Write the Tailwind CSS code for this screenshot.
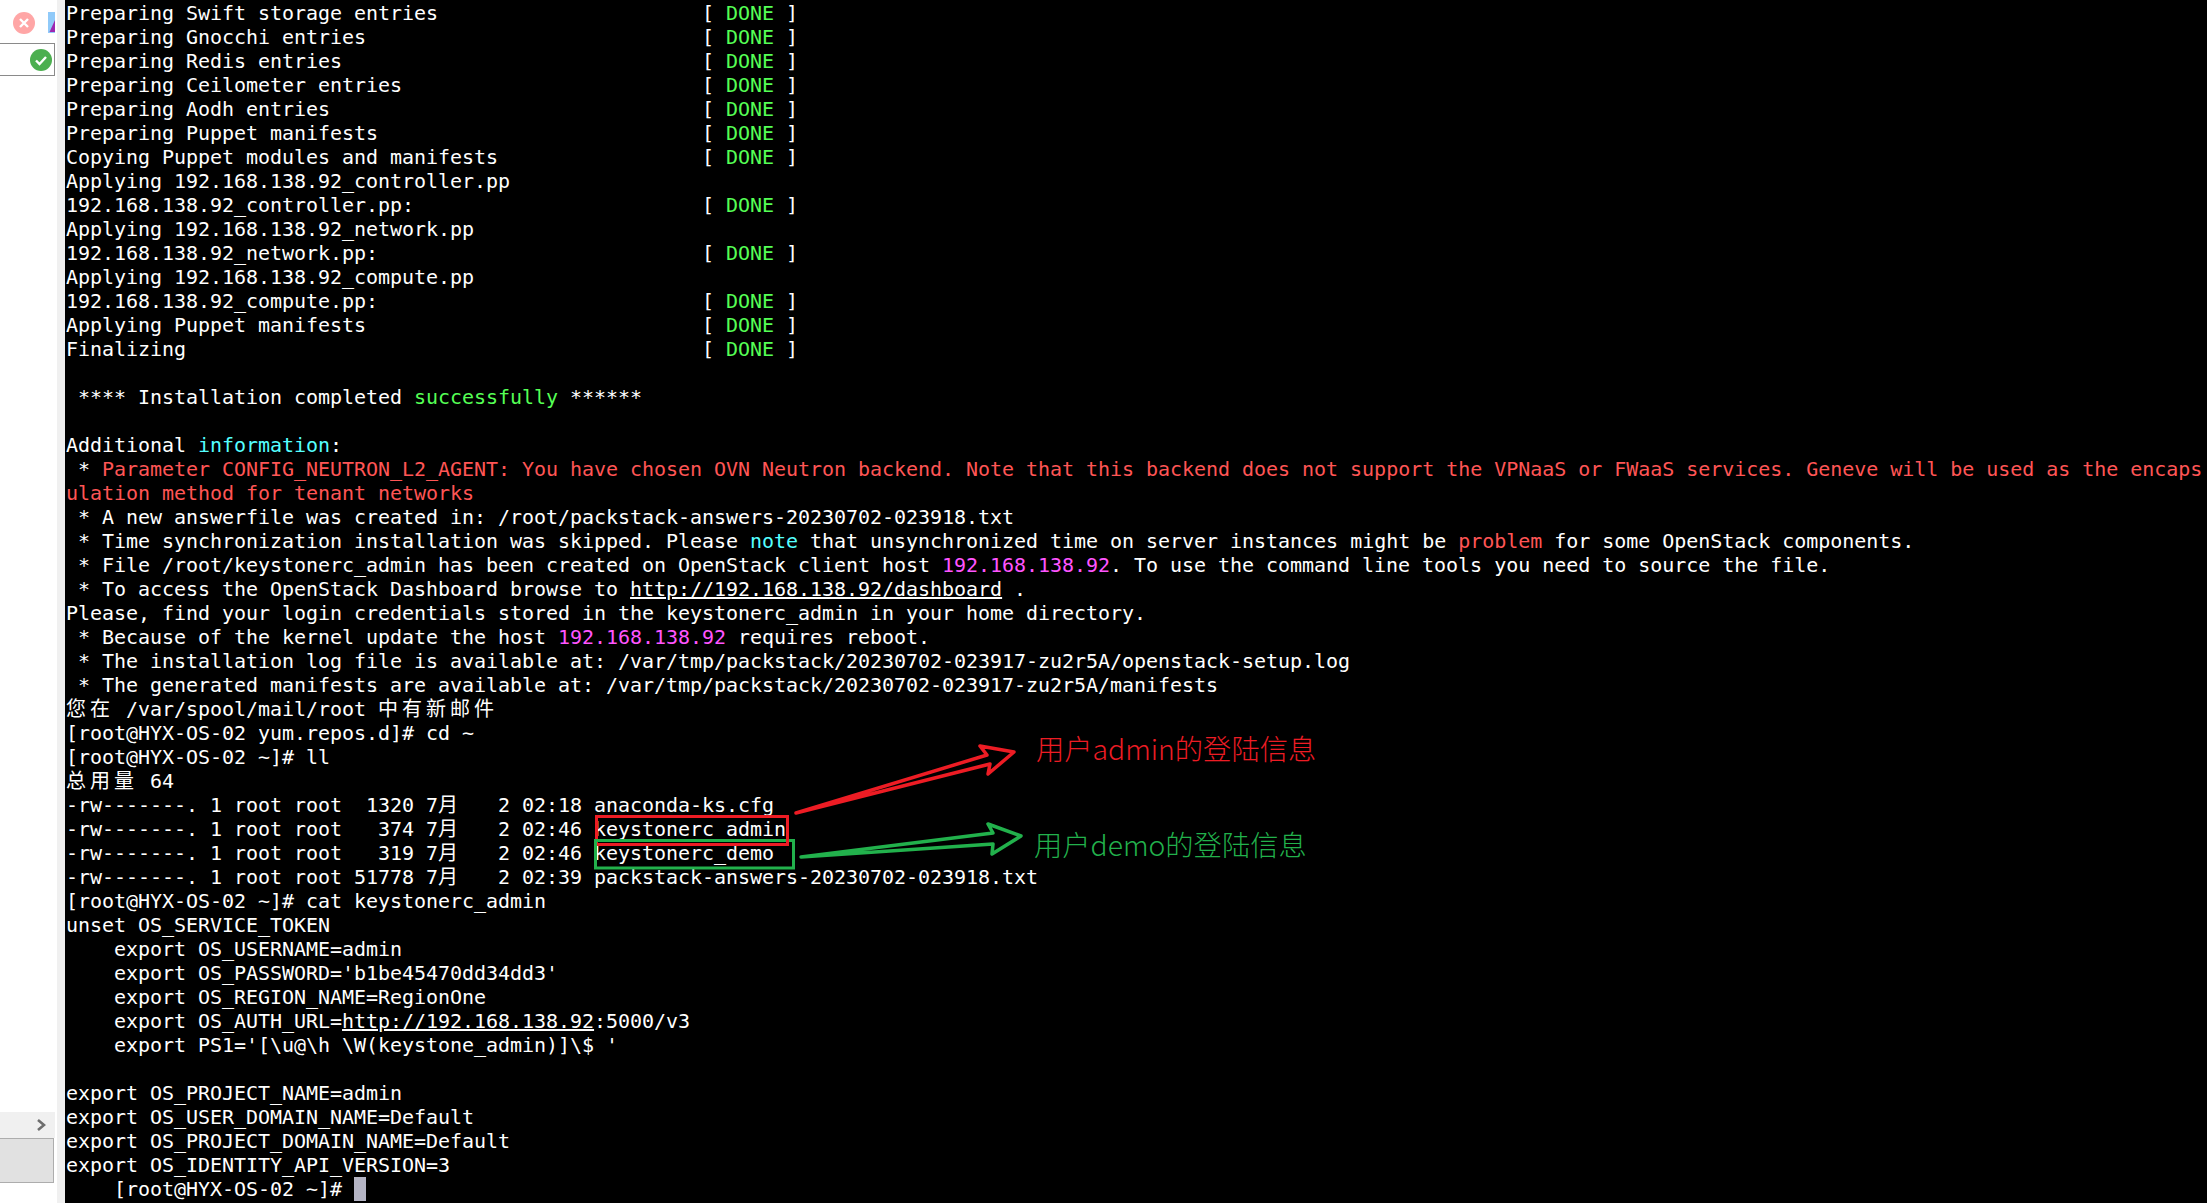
<!DOCTYPE html>
<html>
<head>
<meta charset="utf-8">
<script src="https://cdn.jsdelivr.net/npm/@tailwindcss/browser@4"></script>
</head>
<body class="m-0 bg-black overflow-hidden">
<div class="relative flex w-[2207px] h-[1203px] overflow-hidden">
  <aside class="w-[65px] h-full shrink-0 bg-white flex flex-col border-r-[8px] border-[#f0f0f0]">
    <div class="h-[43px] flex items-start pt-[12px] pl-[13px] gap-[13px]">
      <svg class="w-[22px] h-[22px]" viewBox="0 0 22 22"><circle cx="11" cy="11" r="11" fill="#ffa6a6"/><path d="M7 7l8 8M15 7l-8 8" stroke="#fff" stroke-width="2.4"/></svg>
      <svg class="w-[7px] h-[21px]" viewBox="0 0 7 21"><rect width="7" height="21" fill="#90caf9"/><path d="M1.500 20L7 8v12z" fill="#9c27b0"/></svg>
    </div>
    <div class="h-[33px] w-[55px] bg-white border border-l-0 border-[#8a8a8a] flex items-center justify-end pr-[2px]">
      <svg class="w-[22px] h-[22px]" viewBox="0 0 22 22"><circle cx="11" cy="11" r="11" fill="#4caf50"/><path d="M6 11.500l3.500 3.500L16 8" fill="none" stroke="#fff" stroke-width="2.4"/></svg>
    </div>
    <div class="flex-1"></div>
    <div class="h-[26px] w-[55px] bg-[#f0f0f0] flex items-center justify-end pr-[9px]">
      <svg class="w-[9px] h-[12px]" viewBox="0 0 9 12"><path d="M1 1l6 5-6 5" fill="none" stroke="#6e6e6e" stroke-width="2.600"/></svg>
    </div>
    <div class="h-[45px] w-[54px] bg-[#e1e1e1] border border-l-0 border-[#adadad]"></div>
    <div class="h-[20px]"></div>
  </aside>
  <pre class="flex-1 m-0 pt-px pl-px bg-black text-white font-['DejaVu_Sans_Mono','Noto_Sans_CJK_SC',monospace] text-[20px] leading-[24px] tracking-[-0.04px] overflow-hidden">Preparing Swift storage entries                      [ <span class="text-[#55ff55]">DONE</span> ]
Preparing Gnocchi entries                            [ <span class="text-[#55ff55]">DONE</span> ]
Preparing Redis entries                              [ <span class="text-[#55ff55]">DONE</span> ]
Preparing Ceilometer entries                         [ <span class="text-[#55ff55]">DONE</span> ]
Preparing Aodh entries                               [ <span class="text-[#55ff55]">DONE</span> ]
Preparing Puppet manifests                           [ <span class="text-[#55ff55]">DONE</span> ]
Copying Puppet modules and manifests                 [ <span class="text-[#55ff55]">DONE</span> ]
Applying 192.168.138.92_controller.pp
192.168.138.92_controller.pp:                        [ <span class="text-[#55ff55]">DONE</span> ]
Applying 192.168.138.92_network.pp
192.168.138.92_network.pp:                           [ <span class="text-[#55ff55]">DONE</span> ]
Applying 192.168.138.92_compute.pp
192.168.138.92_compute.pp:                           [ <span class="text-[#55ff55]">DONE</span> ]
Applying Puppet manifests                            [ <span class="text-[#55ff55]">DONE</span> ]
Finalizing                                           [ <span class="text-[#55ff55]">DONE</span> ]

 **** Installation completed <span class="text-[#55ff55]">successfully</span> ******

Additional <span class="text-[#55ffff]">information</span>:
 * <span class="text-[#ff5555]">Parameter CONFIG_NEUTRON_L2_AGENT: You have chosen OVN Neutron backend. Note that this backend does not support the VPNaaS or FWaaS services. Geneve will be used as the encaps
ulation method for tenant networks</span>
 * A new answerfile was created in: /root/packstack-answers-20230702-023918.txt
 * Time synchronization installation was skipped. Please <span class="text-[#55ffff]">note</span> that unsynchronized time on server instances might be <span class="text-[#ff5555]">problem</span> for some OpenStack components.
 * File /root/keystonerc_admin has been created on OpenStack client host <span class="text-[#ff55ff]">192.168.138.92</span>. To use the command line tools you need to source the file.
 * To access the OpenStack Dashboard browse to <span class="underline">http://192.168.138.92/dashboard</span> .
Please, find your login credentials stored in the keystonerc_admin in your home directory.
 * Because of the kernel update the host <span class="text-[#ff55ff]">192.168.138.92</span> requires reboot.
 * The installation log file is available at: /var/tmp/packstack/20230702-023917-zu2r5A/openstack-setup.log
 * The generated manifests are available at: /var/tmp/packstack/20230702-023917-zu2r5A/manifests
<span class="tracking-[4px]">您在</span> /var/spool/mail/root <span class="tracking-[4px]">中有新邮件</span>
[root@HYX-OS-02 yum.repos.d]# cd ~
[root@HYX-OS-02 ~]# ll
<span class="tracking-[4px]">总用量</span> 64
-rw-------. 1 root root  1320 7<span class="tracking-[4px]">月</span>   2 02:18 anaconda-ks.cfg
-rw-------. 1 root root   374 7<span class="tracking-[4px]">月</span>   2 02:46 keystonerc_admin
-rw-------. 1 root root   319 7<span class="tracking-[4px]">月</span>   2 02:46 keystonerc_demo
-rw-------. 1 root root 51778 7<span class="tracking-[4px]">月</span>   2 02:39 packstack-answers-20230702-023918.txt
[root@HYX-OS-02 ~]# cat keystonerc_admin
unset OS_SERVICE_TOKEN
    export OS_USERNAME=admin
    export OS_PASSWORD='b1be45470dd34dd3'
    export OS_REGION_NAME=RegionOne
    export OS_AUTH_URL=<span class="underline">http://192.168.138.92</span>:5000/v3
    export PS1='[\u@\h \W(keystone_admin)]\$ '

export OS_PROJECT_NAME=admin
export OS_USER_DOMAIN_NAME=Default
export OS_PROJECT_DOMAIN_NAME=Default
export OS_IDENTITY_API_VERSION=3
    [root@HYX-OS-02 ~]# <span class="inline-block w-[12px] h-[24px] bg-[#b4b4c4] align-top"></span></pre>
  <svg class="absolute left-0 top-0 w-[2207px] h-[1203px] pointer-events-none" viewBox="0 0 2207 1203" fill="none">
    <rect x="596.500" y="816.500" width="191" height="28" stroke="#ed1c24" stroke-width="3"/>
    <path d="M595.500 840.500H793.500V868H595.500Z" stroke="#22b14c" stroke-width="3"/>
    <path d="M787.500 838V844.500H770" stroke="#ed1c24" stroke-width="3"/>
    <path d="M796 813L987 755L980 746L1014 752L988 774L990 764Z" stroke="#ed1c24" stroke-width="3.500" stroke-linejoin="round"/>
    <path d="M801 857L993 833L988 824L1021 836L992 854L993 844Z" stroke="#22b14c" stroke-width="3.500" stroke-linejoin="round"/>
  </svg>
  <div class="absolute left-[1036px] top-[730px] text-[#ed1c24] font-['Noto_Sans_CJK_SC','Noto_Sans',sans-serif] text-[28.3px] leading-[36px] font-light whitespace-nowrap">用户admin的登陆信息</div>
  <div class="absolute left-[1034px] top-[826px] text-[#22b14c] font-['Noto_Sans_CJK_SC','Noto_Sans',sans-serif] text-[28.3px] leading-[36px] font-light whitespace-nowrap">用户demo的登陆信息</div>
</div>
</body>
</html>
